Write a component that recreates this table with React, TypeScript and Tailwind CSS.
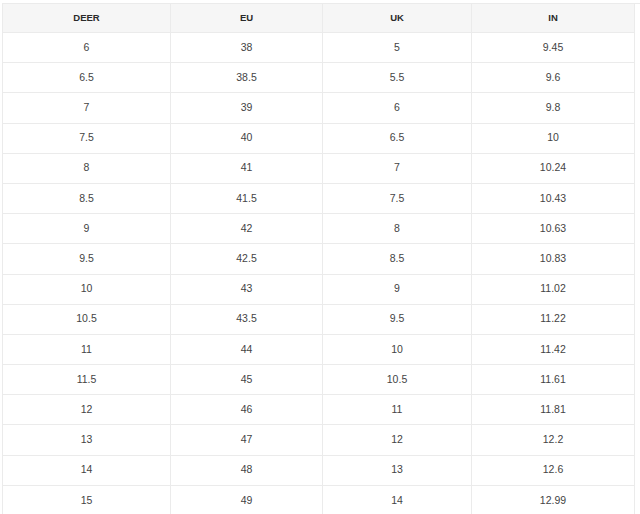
import React from "react";

const rows: [string, string, string, string][] = [
  ["6", "38", "5", "9.45"],
  ["6.5", "38.5", "5.5", "9.6"],
  ["7", "39", "6", "9.8"],
  ["7.5", "40", "6.5", "10"],
  ["8", "41", "7", "10.24"],
  ["8.5", "41.5", "7.5", "10.43"],
  ["9", "42", "8", "10.63"],
  ["9.5", "42.5", "8.5", "10.83"],
  ["10", "43", "9", "11.02"],
  ["10.5", "43.5", "9.5", "11.22"],
  ["11", "44", "10", "11.42"],
  ["11.5", "45", "10.5", "11.61"],
  ["12", "46", "11", "11.81"],
  ["13", "47", "12", "12.2"],
  ["14", "48", "13", "12.6"],
  ["15", "49", "14", "12.99"],
];

const headers = ["DEER", "EU", "UK", "IN"];

export default function App() {
  return (
    <div
      className="w-[640px] h-[514px] overflow-hidden bg-white pl-[2px] pt-[3px]"
      style={{ fontFamily: '"Liberation Sans", Arial, sans-serif' }}
    >
      <div className="grid grid-cols-[168px_152px_149px_163px] grid-rows-[29px] auto-rows-[30.2px] border-l border-t border-[#ebebeb]">
        {headers.map((h) => (
          <div
            key={h}
            className="flex items-center justify-center bg-[#f6f6f6] border-r border-b border-[#ebebeb] text-[9.5px] font-bold text-[#2a2a2a]"
          >
            {h}
          </div>
        ))}
        {rows.map((r, i) =>
          r.map((c, j) => (
            <div
              key={i + "-" + j}
              className="flex items-center justify-center border-r border-b border-[#ebebeb] text-[10.5px] text-[#444]"
            >
              {c}
            </div>
          ))
        )}
      </div>
    </div>
  );
}
